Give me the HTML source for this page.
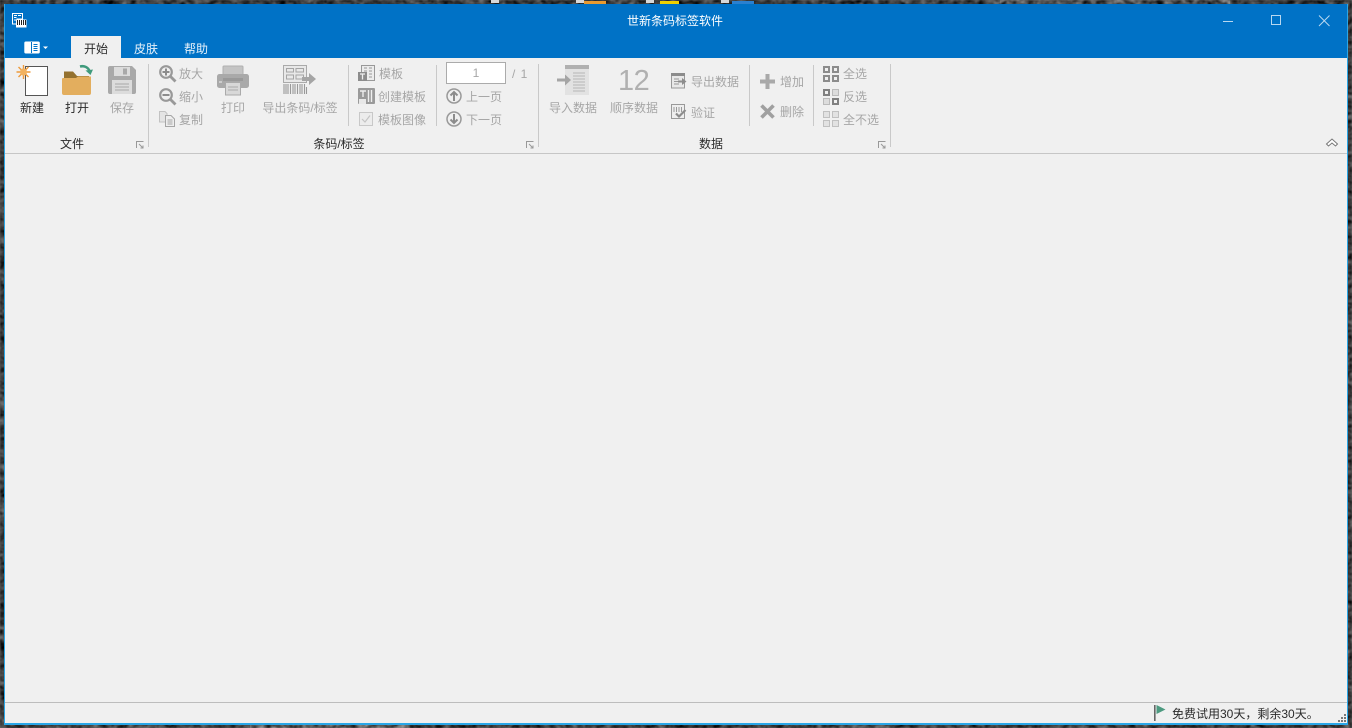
<!DOCTYPE html>
<html lang="zh"><head><meta charset="utf-8"><title>世新条码标签软件</title>
<style>
html,body{margin:0;padding:0;width:1352px;height:728px;overflow:hidden;background:#3c3c3c}
body{position:relative;font-family:"Liberation Sans","Noto Sans CJK SC",sans-serif;font-size:12px}
#bg{position:absolute;left:0;top:0}
.t{position:absolute;white-space:nowrap;color:#a6a6a6;line-height:16px;font-size:12px}
.d{color:#2b2b2b}
.c{transform:translateX(-50%)}
.sep{position:absolute;width:1px;background:#c9c9c9}
svg.i{position:absolute;overflow:visible}
</style></head><body>
<svg id="bg" width="1352" height="728"><filter id="n" x="0" y="0" width="100%" height="100%"><feTurbulence type="fractalNoise" baseFrequency="0.14 0.2" numOctaves="3" seed="4"/><feColorMatrix values="0 0 0 0 0 0 0 0 0 0 0 0 0 0 0 1.1 1.1 0 0 -.62"/><feGaussianBlur stdDeviation=".5"/></filter>
<rect width="1352" height="728" fill="#6e6e6e"/><rect x="250" y="722" width="160" height="6" fill="#9a9a9a"/><rect x="1000" y="0" width="230" height="4" fill="#8c8c8c"/><rect width="1352" height="728" filter="url(#n)" fill="#000"/>
<rect x="491" y="0" width="8" height="3" fill="#d8d8d8"/><rect x="576" y="0" width="8" height="3" fill="#d8d8d8"/><rect x="584" y="1" width="22" height="3" fill="#e89a30"/><rect x="646" y="0" width="8" height="3" fill="#d8d8d8"/><rect x="660" y="1" width="19" height="3" fill="#f0d000"/><rect x="721" y="0" width="8" height="3" fill="#d8d8d8"/><rect x="732" y="1" width="22" height="3" fill="#2a80d0"/></svg>

<div style="position:absolute;left:4px;top:4px;width:1344px;height:721px;background:#2aa7e8"></div>
<div style="position:absolute;left:5px;top:4px;width:1342px;height:54px;background:#0072c6"></div>
<div style="position:absolute;left:5px;top:58px;width:1342px;height:665px;background:#f0f0f0"></div>

<!-- app icon -->
<svg class="i" style="left:12px;top:13px" width="16" height="16" viewBox="0 0 16 16"><path d="M.5 .5H10.500V6H5V11H.5Z" fill="#0072c6" stroke="#fff"/><path d="M2 2.500H5M6 2.500H9M2 4.500H4.500M2 7H4" stroke="#fff"/><path d="M4 6.500H14.500V14.500H4Z" fill="#fff"/><path d="M5.500 7V12M7.500 7V12M9.500 7V12M11.500 7V12M13.500 7V12" stroke="#222" stroke-width="1"/></svg>
<div class="t" style="left:0;width:1352px;top:13px;text-align:center;color:#fff;font-size:12px;line-height:16px;padding-right:2px;box-sizing:border-box">世新条码标签软件</div>
<!-- window controls -->
<svg class="i" style="left:1222px;top:14px" width="110" height="14"><path d="M1 7.500H11" stroke="#b8d8f0"/><rect x="49.500" y="1.500" width="9" height="9" fill="none" stroke="#b8d8f0"/><path d="M97 1.500L107.500 12M107.500 1.500L97 12" stroke="#b8d8f0"/></svg>
<!-- app menu -->
<svg class="i" style="left:24px;top:41px" width="26" height="12"><rect x=".8" y="1" width="14.500" height="11" rx="1" fill="#fff" stroke="#fff"/><path d="M7.500 1V12" stroke="#0072c6"/><path d="M9.500 3.500H13.500M9.500 5.500H13.500M9.500 7.500H13.500M9.500 9.500H13.500" stroke="#0072c6"/><path d="M19 5.500H24L21.500 8Z" fill="#fff"/></svg>
<!-- tabs -->
<div style="position:absolute;left:71px;top:36px;width:50px;height:22px;background:#f0f0f0"></div>
<div class="t d c" style="left:96px;top:41px">开始</div>
<div class="t c" style="left:146px;top:41px;color:#e6f1fa">皮肤</div>
<div class="t c" style="left:196px;top:41px;color:#e6f1fa">帮助</div>

<!-- ribbon bottom line -->
<div style="position:absolute;left:5px;top:153px;width:1342px;height:1px;background:#c6c6c6"></div>
<div style="position:absolute;left:5px;top:702px;width:1342px;height:1px;background:#bdbdbd"></div>

<!-- separators -->
<div class="sep" style="left:148px;top:64px;height:83px"></div>
<div class="sep" style="left:538px;top:64px;height:83px"></div>
<div class="sep" style="left:890px;top:64px;height:83px"></div>
<div class="sep" style="left:348px;top:65px;height:61px"></div>
<div class="sep" style="left:436px;top:65px;height:61px"></div>
<div class="sep" style="left:749px;top:65px;height:61px"></div>
<div class="sep" style="left:813px;top:65px;height:61px"></div>

<!-- 新建 -->
<svg class="i" style="left:16px;top:65px" width="34" height="32"><rect x="9.500" y="1.500" width="22" height="29" fill="#fff" stroke="#555"/><g stroke="#ee9a3a" stroke-width="1.400"><path d="M7.500 0V14M.5 7H14.500M2.500 2L12.500 12M12.500 2L2.500 12"/></g><circle cx="7.500" cy="7" r="3.600" fill="#f2b260"/></svg>
<div class="t d c" style="left:32px;top:100px">新建</div>
<!-- 打开 -->
<svg class="i" style="left:62px;top:65px" width="32" height="32"><path d="M2 6.500H11L15 11H27V14H2Z" fill="#94712f"/><path d="M0 14Q0 13 1 13H14L16 11.500H29V28Q29 30 27 30H2Q0 30 0 28Z" fill="#e3ae5e"/><path d="M18 1.500C22 .5 26 2 27.500 6" fill="none" stroke="#3f9a7c" stroke-width="2.500"/><path d="M23.500 5.500L31 4.500L28.500 10Z" fill="#3f9a7c"/></svg>
<div class="t d c" style="left:77px;top:100px">打开</div>
<!-- 保存 -->
<svg class="i" style="left:108px;top:66px" width="28" height="28"><path d="M2 0H24L28 4V26Q28 28 26 28H2Q0 28 0 26V2Q0 0 2 0Z" fill="#a9a9a9"/><rect x="6" y="1" width="16" height="9" fill="#dcdcdc"/><rect x="15" y="2.500" width="4" height="6" fill="#a9a9a9"/><rect x="4" y="14" width="20" height="14" fill="#dcdcdc"/><path d="M7 18H21M7 21H21M7 24H21" stroke="#a9a9a9"/></svg>
<div class="t c" style="left:122px;top:100px">保存</div>
<div class="t d c" style="left:72px;top:136px">文件</div>
<!-- launcher icons -->
<svg class="i" style="left:136px;top:141px" width="8" height="8"><path d="M.5 7V.5H7.500M3 3L7 7M7 4.500V7H4.500" fill="none" stroke="#999"/></svg>
<svg class="i" style="left:526px;top:141px" width="8" height="8"><path d="M.5 7V.5H7.500M3 3L7 7M7 4.500V7H4.500" fill="none" stroke="#999"/></svg>
<svg class="i" style="left:878px;top:141px" width="8" height="8"><path d="M.5 7V.5H7.500M3 3L7 7M7 4.500V7H4.500" fill="none" stroke="#999"/></svg>

<!-- zoom -->
<svg class="i" style="left:159px;top:65px" width="18" height="18"><circle cx="7" cy="7" r="5.800" fill="none" stroke="#999" stroke-width="2.200"/><path d="M11 11L16.500 16.500" stroke="#999" stroke-width="2.800"/><path d="M3.500 7H10.500M7 3.500V10.500" stroke="#8c8c8c" stroke-width="2"/></svg>
<div class="t" style="left:179px;top:66px">放大</div>
<svg class="i" style="left:159px;top:88px" width="18" height="18"><circle cx="7" cy="7" r="5.800" fill="none" stroke="#999" stroke-width="2.200"/><path d="M11 11L16.500 16.500" stroke="#999" stroke-width="2.800"/><path d="M3.500 7H10.500" stroke="#8c8c8c" stroke-width="2"/></svg>
<div class="t" style="left:179px;top:89px">缩小</div>
<svg class="i" style="left:159px;top:111px" width="17" height="16"><path d="M.5 .5H6L8 2.500V11H.5Z" fill="#e4e4e4" stroke="#c2c2c2"/><path d="M6.500 4.500H12L15.500 8V15.500H6.500Z" fill="#eee" stroke="#a5a5a5"/><path d="M8.500 9H13.500M8.500 11H13.500M8.500 13H13.500" stroke="#a5a5a5"/></svg>
<div class="t" style="left:179px;top:112px">复制</div>
<!-- print -->
<svg class="i" style="left:217px;top:65px" width="32" height="31"><rect x="6" y="1" width="20" height="9" rx="1" fill="#c4c4c4" stroke="#b0b0b0"/><rect x="0" y="9" width="32" height="14" rx="2.500" fill="#a9a9a9"/><rect x="6" y="13" width="20" height="3" fill="#999"/><path d="M2 17H5" stroke="#eee"/><rect x="8.500" y="17.500" width="15" height="12.500" fill="#d8d8d8" stroke="#aaa"/><path d="M11 22H21M11 25H21" stroke="#aaa"/></svg>
<div class="t c" style="left:233px;top:100px">打印</div>
<!-- export barcode -->
<svg class="i" style="left:283px;top:65px" width="34" height="31"><rect x=".5" y=".5" width="23" height="17" fill="#e8e8e8" stroke="#aaa"/><path d="M3.500 3.500H10.500V7H3.500ZM13 3.500H20.500V7H13ZM3.500 10H10.500V14H3.500ZM13 10H20.500V14H13Z" fill="none" stroke="#a5a5a5"/><path d="M1 19V29M3 19V29M5 19V29M7.500 19V29M10 19V29M12 19V29M14.500 19V29M17 19V29M19 19V29M21.500 19V29M23.500 22V29" stroke="#999" stroke-width="1.100"/><path d="M19 12H26V8L33 14L26 20V16H19Z" fill="#a5a5a5"/></svg>
<div class="t c" style="left:300px;top:100px">导出条码/标签</div>
<div class="t d c" style="left:339px;top:136px">条码/标签</div>

<!-- template -->
<svg class="i" style="left:358px;top:65px" width="17" height="16"><rect x="3.500" y=".5" width="13" height="15" fill="#ececec" stroke="#999"/><path d="M6 3H9M11 3H14M6 6H9M11 6H14M11 9H14M11 12H14" stroke="#999"/><rect x="0" y="7" width="9" height="9" fill="#8c8c8c"/><path d="M2 9H7M4.500 9V14.500" stroke="#eee" stroke-width="1.300"/></svg>
<div class="t" style="left:379px;top:66px">模板</div>
<svg class="i" style="left:358px;top:88px" width="17" height="16"><rect x="0" y="0" width="17" height="16" rx="1" fill="#9a9a9a"/><path d="M2 3H8M5 3V9M10.500 2V14M13.500 2V14" stroke="#eee" stroke-width="1.400"/><path d="M1 11H8V16H1Z" fill="#e8e8e8"/></svg>
<div class="t" style="left:378px;top:89px">创建模板</div>
<svg class="i" style="left:359px;top:112px" width="14" height="14"><rect x=".5" y=".5" width="13" height="13" fill="#ececec" stroke="#c8c8c8"/><path d="M3 7L6 10L11 3.500" fill="none" stroke="#c4c4c4" stroke-width="1.200"/></svg>
<div class="t" style="left:378px;top:112px">模板图像</div>

<!-- page -->
<div style="position:absolute;left:446px;top:62px;width:58px;height:20px;border:1px solid #ababab;background:#fff;color:#a6a6a6;text-align:center;line-height:20px;font-size:12px">1</div>
<div class="t" style="left:512px;top:66px;letter-spacing:1px">/ 1</div>
<svg class="i" style="left:446px;top:88px" width="16" height="16"><circle cx="8" cy="8" r="7" fill="none" stroke="#999" stroke-width="1.500"/><path d="M8 13V4M4.500 7.500L8 4L11.500 7.500" fill="none" stroke="#8c8c8c" stroke-width="2"/></svg>
<div class="t" style="left:466px;top:89px">上一页</div>
<svg class="i" style="left:446px;top:111px" width="16" height="16"><circle cx="8" cy="8" r="7" fill="none" stroke="#999" stroke-width="1.500"/><path d="M8 3V12M4.500 8.500L8 12L11.500 8.500" fill="none" stroke="#8c8c8c" stroke-width="2"/></svg>
<div class="t" style="left:466px;top:112px">下一页</div>

<!-- import -->
<svg class="i" style="left:556px;top:65px" width="34" height="30"><rect x="9" y="0" width="24" height="30" fill="#e2e2e2"/><rect x="9" y="0" width="24" height="4" fill="#b0b0b0"/><path d="M17 8H29M17 11H29M17 14H29M17 17H29M17 20H29M17 23H29M17 26H29" stroke="#b5b5b5"/><path d="M1 13.500H9V9.500L15 15L9 20.500V16.500H1Z" fill="#a5a5a5"/></svg>
<div class="t c" style="left:573px;top:100px">导入数据</div>
<div class="t" style="left:618px;top:62px;font-size:29px;line-height:38px;color:#b0b0b0;letter-spacing:-.5px">12</div>
<div class="t c" style="left:634px;top:100px">顺序数据</div>
<svg class="i" style="left:671px;top:73px" width="16" height="16"><rect x=".5" y=".5" width="13" height="14.500" fill="#e8e8e8" stroke="#999"/><rect x="0" y="0" width="14" height="3" fill="#8c8c8c"/><path d="M3 6H8M3 8.500H8M3 11H8" stroke="#999"/><path d="M7 7.500H11V5L15.500 8.500L11 12V9.500H7Z" fill="#8c8c8c"/></svg>
<div class="t" style="left:691px;top:74px">导出数据</div>
<svg class="i" style="left:671px;top:104px" width="16" height="16"><rect x=".5" y=".5" width="13" height="14" fill="#eee" stroke="#999"/><path d="M3 3V8M5.500 3V8M8 3V8M10.500 3V8" stroke="#999"/><path d="M5 9.500L8 12.500L14.500 6" fill="none" stroke="#8c8c8c" stroke-width="2.200"/></svg>
<div class="t" style="left:691px;top:105px">验证</div>
<svg class="i" style="left:760px;top:74px" width="15" height="15"><path d="M5.500 0H9.500V5.500H15V9.500H9.500V15H5.500V9.500H0V5.500H5.500Z" fill="#a9a9a9"/></svg>
<div class="t" style="left:780px;top:74px">增加</div>
<svg class="i" style="left:760px;top:104px" width="15" height="15"><path d="M1.500 1.500L13.500 13.500M13.500 1.500L1.500 13.500" stroke="#a0a0a0" stroke-width="3.600"/></svg>
<div class="t" style="left:780px;top:104px">删除</div>

<!-- select -->
<svg class="i" style="left:823px;top:66px" width="16" height="16"><g fill="none" stroke="#8c8c8c" stroke-width="2"><rect x="1" y="1" width="5" height="5"/><rect x="10" y="1" width="5" height="5"/><rect x="1" y="10" width="5" height="5"/><rect x="10" y="10" width="5" height="5"/></g></svg>
<div class="t" style="left:843px;top:66px">全选</div>
<svg class="i" style="left:823px;top:89px" width="16" height="16"><g fill="none"><rect x="1" y="1" width="5" height="5" stroke="#808080" stroke-width="2"/><rect x="9.500" y=".5" width="6" height="6" fill="#ddd" stroke="#bbb"/><rect x=".5" y="9.500" width="6" height="6" fill="#ddd" stroke="#bbb"/><rect x="10" y="10" width="5" height="5" stroke="#808080" stroke-width="2"/></g></svg>
<div class="t" style="left:843px;top:89px">反选</div>
<svg class="i" style="left:823px;top:111px" width="16" height="16"><g fill="#e2e2e2" stroke="#c0c0c0"><rect x=".5" y=".5" width="6" height="6"/><rect x="9.500" y=".5" width="6" height="6"/><rect x=".5" y="9.500" width="6" height="6"/><rect x="9.500" y="9.500" width="6" height="6"/></g></svg>
<div class="t" style="left:843px;top:112px">全不选</div>
<div class="t d c" style="left:711px;top:136px">数据</div>
<svg class="i" style="left:1326px;top:138px" width="12" height="9"><path d="M.5 6L6 1L11.500 6L9.500 8L6 5L2.500 8Z" fill="#fff" stroke="#777"/></svg>

<!-- status -->
<svg class="i" style="left:1154px;top:705px" width="14" height="16"><path d="M.8 0V16" stroke="#666" stroke-width="1.600"/><path d="M2.500 0L11.500 4.500L2.500 9Z" fill="#4d9a80"/></svg>
<div class="t d" style="left:1172px;top:706px">免费试用30天，剩余30天。</div>
<svg class="i" style="left:1338px;top:714px" width="9" height="9"><g fill="#777"><rect x="6" y="0" width="2" height="2"/><rect x="3" y="3" width="2" height="2"/><rect x="6" y="3" width="2" height="2"/><rect x="0" y="6" width="2" height="2"/><rect x="3" y="6" width="2" height="2"/><rect x="6" y="6" width="2" height="2"/></g></svg>
</body></html>
